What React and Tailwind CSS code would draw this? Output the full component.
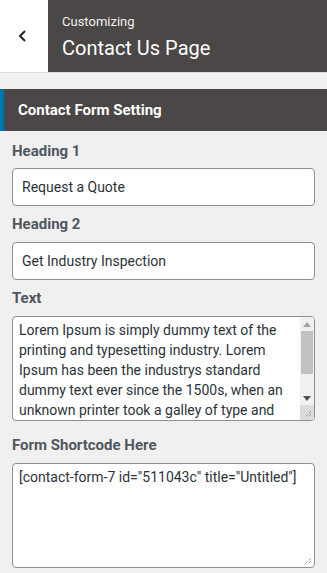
import React from "react";

const lorem =
  "Lorem Ipsum is simply dummy text of the printing and typesetting industry. Lorem Ipsum has been the industrys standard dummy text ever since the 1500s, when an unknown printer took a galley of type and";

function Grip() {
  return (
    <svg width="8" height="8" viewBox="0 0 8 8" className="absolute right-[2px] bottom-[2px]">
      <path d="M7 1 L1 7 M7 4 L4 7" stroke="#7a7a7a" strokeWidth="1" strokeDasharray="1 1" fill="none" />
    </svg>
  );
}

export default function App() {
  return (
    <div className="w-[327px] h-[573px] overflow-hidden bg-[#f0f0f1] font-['Roboto',sans-serif]">
      <div className="flex h-[73px] border-b border-[#dcdcde]">
        <div className="w-[48px] bg-white flex items-center justify-center">
          <svg width="12" height="14" viewBox="0 0 12 14" className="ml-[-2px]">
            <path d="M8 2 L3 7 L8 12" fill="none" stroke="#1d2327" strokeWidth="2" />
          </svg>
        </div>
        <div className="flex-1 bg-[#4b4746] pl-[14px] pt-[13px]">
          <div className="text-[13px] leading-[18px] text-[#f0f0f1]">Customizing</div>
          <div className="text-[20px] leading-[28px] text-white mt-[3px]">Contact Us Page</div>
        </div>
      </div>
      <div className="mt-[16px] h-[42px] bg-[#4b4746] border-l-[4px] border-[#0073aa] flex items-center pl-[14px]">
        <span className="text-[15px] font-bold text-white">Contact Form Setting</span>
      </div>
      <div className="px-[12px] pt-[10px]">
        <div className="text-[15px] leading-[20px] font-bold text-[#50575e] mb-[7px]">Heading 1</div>
        <div className="h-[38px] bg-white border border-[#8c8f94] rounded-[4px] flex items-center pl-[9px] text-[14px] text-[#2c3338]">
          Request a Quote
        </div>
        <div className="text-[15px] leading-[20px] font-bold text-[#50575e] mt-[8px] mb-[8px]">Heading 2</div>
        <div className="h-[38px] bg-white border border-[#8c8f94] rounded-[4px] flex items-center pl-[9px] text-[14px] text-[#2c3338]">
          Get Industry Inspection
        </div>
        <div className="text-[15px] leading-[20px] font-bold text-[#50575e] mt-[8px] mb-[8px]">Text</div>
        <div className="flex h-[105px] bg-white border border-[#8c8f94] rounded-[4px] overflow-hidden">
          <div className="flex-1 overflow-hidden pl-[6px] pr-[4px] pt-[3px] text-[14px] leading-[20px] text-[#2c3338]">
            {lorem}
          </div>
          <div className="w-[14px] flex flex-col bg-[#f1f1f1]">
            <div className="h-[14px] flex items-center justify-center">
              <svg width="8" height="5" viewBox="0 0 8 5"><path d="M4 0 L8 5 L0 5 Z" fill="#a3a3a3" /></svg>
            </div>
            <div className="mx-[1px] h-[43px] bg-[#c1c1c1]" />
            <div className="flex-1" />
            <div className="h-[14px] flex items-center justify-center">
              <svg width="8" height="5" viewBox="0 0 8 5"><path d="M0 0 L8 0 L4 5 Z" fill="#505050" /></svg>
            </div>
            <div className="relative h-[15px] bg-[#dcdcdc]">
              <Grip />
            </div>
          </div>
        </div>
        <div className="text-[15px] leading-[20px] font-bold text-[#50575e] mt-[14px] mb-[8px]">Form Shortcode Here</div>
        <div className="relative h-[105px] bg-white border border-[#8c8f94] rounded-[4px] pl-[6px] pt-[3px] text-[14px] leading-[20px] text-[#2c3338]">
          [contact-form-7 id="511043c" title="Untitled"]
          <Grip />
        </div>
      </div>
    </div>
  );
}
